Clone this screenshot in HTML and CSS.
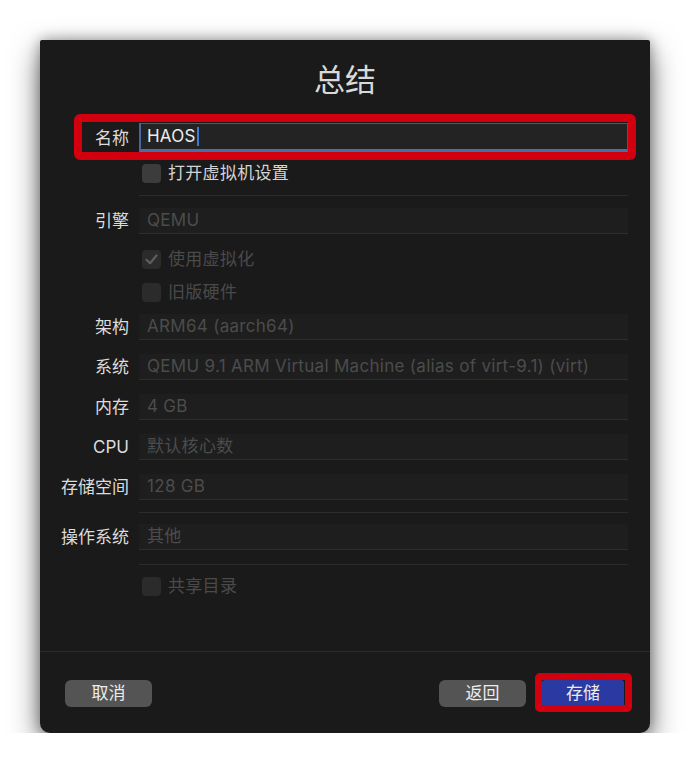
FILE: index.html
```html
<!DOCTYPE html>
<html lang="zh-CN">
<head>
<meta charset="utf-8">
<title>总结</title>
<link rel="stylesheet" href="styles.css">
</head>
<body>
<div class="window">
  <h1 class="title">总结</h1>
  <div class="form">
    <div class="row row-name">
      <span class="frame"></span>
      <label class="label">名称</label>
      <div class="field field-focus"><span class="value-main">HAOS</span><span class="caret"></span></div>
    </div>
    <div class="row row-check gap-11">
      <span></span>
      <div class="check"><span class="box"></span><span class="check-text">打开虚拟机设置</span></div>
    </div>
    <div class="row gap-12"><span></span><div class="sep"></div></div>
    <div class="row gap-12">
      <label class="label">引擎</label>
      <div class="field">QEMU</div>
    </div>
    <div class="row row-check gap-15">
      <span></span>
      <div class="check disabled"><span class="box checked"><svg viewBox="0 0 19 19" width="19" height="19"><path d="M4.5 9.8 L8 13.2 L14.5 5.5" fill="none" stroke="#5e5e5e" stroke-width="2.2" stroke-linecap="round" stroke-linejoin="round"/></svg></span><span class="check-text">使用虚拟化</span></div>
    </div>
    <div class="row row-check gap-13">
      <span></span>
      <div class="check disabled"><span class="box"></span><span class="check-text">旧版硬件</span></div>
    </div>
    <div class="row gap-12">
      <label class="label">架构</label>
      <div class="field">ARM64 (aarch64)</div>
    </div>
    <div class="row gap-14">
      <label class="label">系统</label>
      <div class="field">QEMU 9.1 ARM Virtual Machine (alias of virt-9.1) (virt)</div>
    </div>
    <div class="row gap-14">
      <label class="label">内存</label>
      <div class="field">4 GB</div>
    </div>
    <div class="row gap-14">
      <label class="label">CPU</label>
      <div class="field">默认核心数</div>
    </div>
    <div class="row gap-14">
      <label class="label">存储空间</label>
      <div class="field">128 GB</div>
    </div>
    <div class="row gap-12"><span></span><div class="sep"></div></div>
    <div class="row gap-11">
      <label class="label">操作系统</label>
      <div class="field">其他</div>
    </div>
    <div class="row gap-14"><span></span><div class="sep"></div></div>
    <div class="row row-check gap-11">
      <span></span>
      <div class="check disabled"><span class="box"></span><span class="check-text">共享目录</span></div>
    </div>
  </div>
  <div class="footer">
    <button class="btn">取消</button>
    <div class="spacer"></div>
    <button class="btn">返回</button>
    <div class="save-wrap">
      <span class="frame-btn"></span>
      <button class="btn btn-primary">存储</button>
    </div>
  </div>
</div>
</body>
</html>
```

FILE: styles.css
```css
* { box-sizing: border-box; }

html, body {
  margin: 0;
  padding: 0;
  background: #ffffff;
}

body {
  font-family: "Inter", "Noto Sans CJK SC", sans-serif;
  padding: 40px 0 0 40px;
}

.window {
  width: 610px;
  height: 693px;
  background: #1a1a1a;
  border-radius: 2px 2px 10px 10px;
  box-shadow: 0 12px 30px rgba(0, 0, 0, 0.55), 0 0 14px rgba(0, 0, 0, 0.35);
  display: flex;
  flex-direction: column;
}

.title {
  margin: 20px 0 0 0;
  height: 40px;
  line-height: 40px;
  text-align: center;
  font-size: 31px;
  font-weight: 400;
  color: #d9d9d9;
}

.form {
  flex: 1;
  padding: 0 22px 0 20px;
  display: flex;
  flex-direction: column;
}

.row {
  display: grid;
  grid-template-columns: 69px 489px;
  column-gap: 10px;
  align-items: center;
}

.row-name {
  position: relative;
  margin-top: 23px;
}

.frame {
  position: absolute;
  left: 14px;
  right: -8px;
  top: -9px;
  bottom: -8px;
  border: 8px solid #d2000e;
  border-radius: 6px;
  pointer-events: none;
}

.gap-11 { margin-top: 11px; }
.gap-12 { margin-top: 12px; }
.gap-13 { margin-top: 13px; }
.gap-14 { margin-top: 14px; }
.gap-15 { margin-top: 15px; }

.label {
  text-align: right;
  font-size: 17px;
  color: #dcdcdc;
  white-space: nowrap;
  line-height: 26px;
}

.field {
  height: 26px;
  line-height: 25px;
  padding-left: 8px;
  background: #1e1e1e;
  border-bottom: 1px solid #2e2e2e;
  font-size: 17px;
  letter-spacing: 0.3px;
  color: #4c4c4c;
  white-space: nowrap;
  overflow: hidden;
}

.field-focus {
  height: 29px;
  line-height: 25px;
  background: #232323;
  border: 1px solid #4a5585;
  border-left: 2px solid #4a66a0;
  border-bottom: 3px solid #4a6fa6;
  padding-left: 6px;
  letter-spacing: 0.2px;
  color: #ececec;
  display: flex;
  align-items: center;
}

.value-main { color: #ededed; }

.caret {
  display: inline-block;
  width: 2px;
  height: 19px;
  background: #3c7ad8;
  margin-left: 1px;
}

.sep {
  height: 1px;
  background: #2c2c2c;
}

.check {
  display: flex;
  align-items: center;
  height: 20px;
  gap: 7px;
  margin-left: 3px;
}

.box {
  width: 19px;
  height: 19px;
  border-radius: 4px;
  background: #3c3c3c;
  display: flex;
  align-items: center;
  justify-content: center;
}

.check-text {
  font-size: 17px;
  color: #d4d4d4;
  line-height: 20px;
  letter-spacing: 0.3px;
}

.check.disabled .box { background: #2b2b2b; }
.check.disabled .check-text { color: #4a4a4a; }

.footer {
  height: 82px;
  border-top: 1px solid #2b2b2b;
  display: flex;
  align-items: flex-start;
  padding: 28px 26px 0 25px;
}

.spacer { flex: 1; }

.btn {
  font-family: "Inter", "Noto Sans CJK SC", sans-serif;
  font-size: 17px;
  color: #ececec;
  background: #545454;
  border: none;
  border-radius: 6px;
  height: 27px;
  width: 87px;
  padding: 0;
  line-height: 27px;
}

.save-wrap {
  position: relative;
  margin-left: 16px;
  display: flex;
}

.btn-primary {
  width: 82px;
  background: #2b3aa2;
  border-radius: 3px;
}

.frame-btn {
  position: absolute;
  left: -7px;
  right: -8px;
  top: -7px;
  bottom: -5px;
  border: 7px solid #d2000e;
  border-radius: 5px;
  pointer-events: none;
  z-index: 1;
}
```
